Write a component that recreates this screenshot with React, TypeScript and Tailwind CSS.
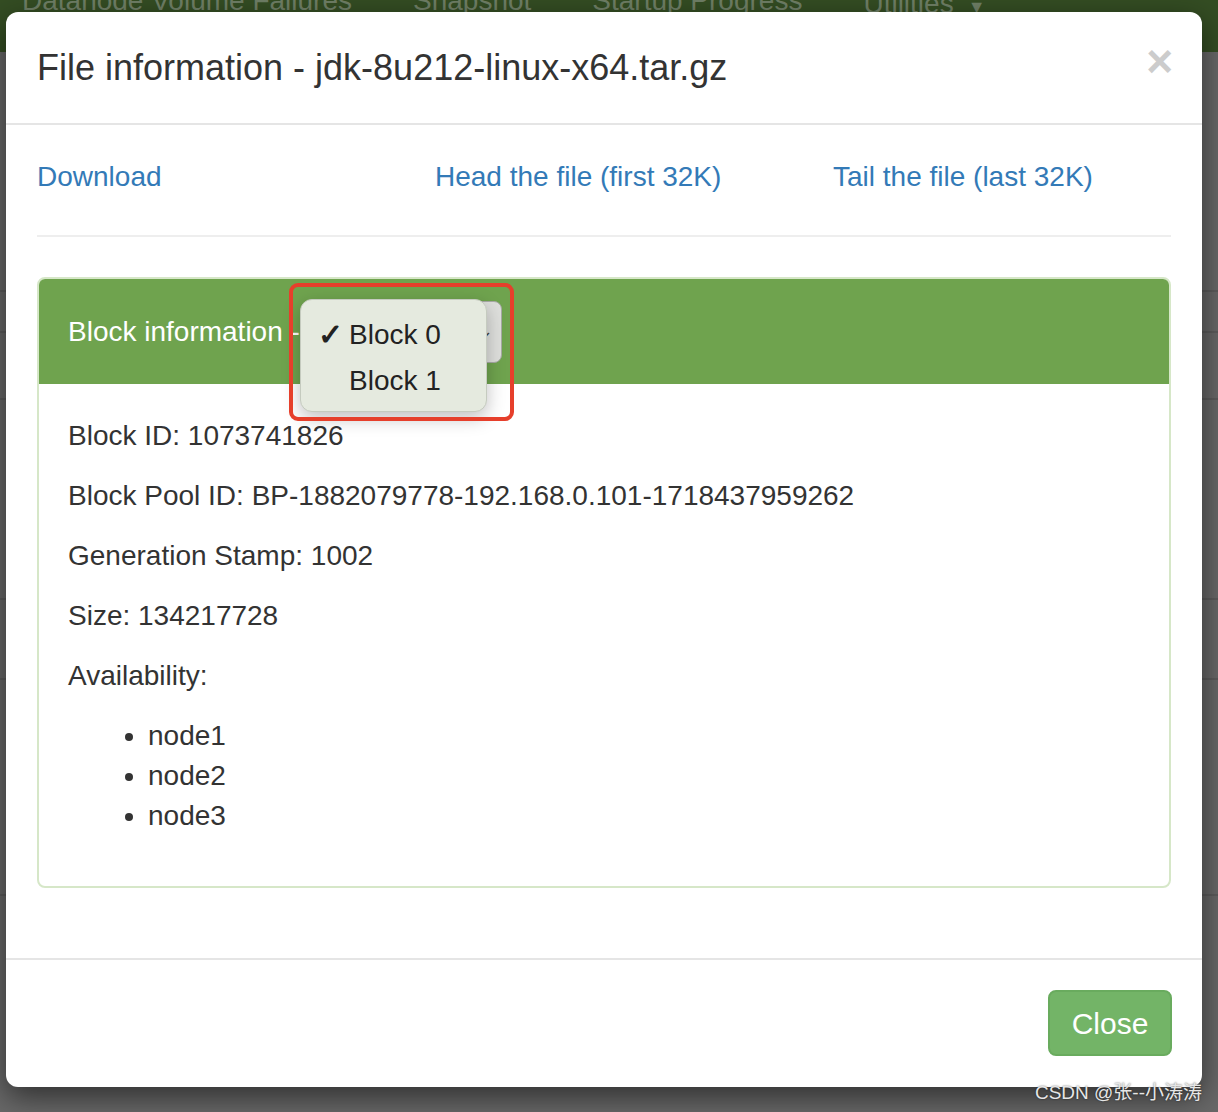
import React from 'react';

const NAV_ITEMS = ['Datanode Volume Failures', 'Snapshot', 'Startup Progress', 'Utilities'];

const BLOCK_FIELDS = [
  { label: 'Block ID', value: '1073741826' },
  { label: 'Block Pool ID', value: 'BP-1882079778-192.168.0.101-1718437959262' },
  { label: 'Generation Stamp', value: '1002' },
  { label: 'Size', value: '134217728' },
];

const NODES = ['node1', 'node2', 'node3'];

const font = { fontFamily: '"Liberation Sans", Arial, sans-serif' };

const BackgroundPage = () => (
  <div className="flex flex-col w-full">
    <div className="h-[52px] bg-[#344d23] overflow-hidden">
      <div className="flex items-start gap-[61px] pl-[22px] -mt-[13px] text-[28px] leading-[28px] text-[#6f7f66]">
        {NAV_ITEMS.map((item) => (
          <span key={item} className="flex items-center gap-[14px] whitespace-nowrap">
            {item}
            {item === 'Utilities' && <span className="text-[18px] mt-[6px]">▼</span>}
          </span>
        ))}
      </div>
    </div>
    <div className="h-[240px] border-b-2 border-[#5c5c5c]" />
    <div className="h-[41px] border-b-2 border-[#5c5c5c]" />
    <div className="h-[67px] border-b-2 border-[#5c5c5c]" />
    <div className="h-[200px] border-b-2 border-[#5c5c5c]" />
    <div className="h-[80px] border-b-2 border-[#5c5c5c]" />
    <div className="h-[216px] border-b-2 border-[#5c5c5c]" />
  </div>
);

const BlockSelectPopup = () => (
  <>
    <div className="absolute left-[250px] top-[4px] w-[225px] h-[138px] border-[4px] border-[#e63f2b] rounded-[9px] z-10" />
    <div className="absolute left-[261px] top-[20px] w-[187px] h-[113px] rounded-[12px] bg-[#e5eadf] border border-[#c5cbbf] shadow-[0_6px_18px_rgba(0,0,0,0.25)] flex flex-col justify-center pt-[4px] text-[28px] leading-[46px] text-[#222]">
      <div className="flex items-center">
        <span className="w-[48px] text-right pr-[6px] text-[30px] font-bold">✓</span>
        <span>Block 0</span>
      </div>
      <div className="flex items-center">
        <span className="w-[48px]" />
        <span>Block 1</span>
      </div>
    </div>
  </>
);

const BlockPanel = () => (
  <div className="relative border-2 border-[#d6e7c8] rounded-[8px] mb-[40px]">
    <div className="h-[105px] bg-[#6fa34e] rounded-t-[6px] flex items-center pl-[29px] text-white text-[28px]">
      <span className="whitespace-nowrap">Block information -</span>
      <div className="ml-[6px] w-[196px] h-[62px] rounded-[8px] bg-[#dedfdc] border border-[#a7a9a4] flex items-center justify-end pr-[8px] text-[#444] text-[18px]">
        ⌄
      </div>
    </div>
    <div className="px-[29px] pt-[32px] pb-[30px] text-[28px] leading-[40px] text-[#333]">
      {BLOCK_FIELDS.map((f) => (
        <p key={f.label} className="mb-[20px]">
          {f.label}: {f.value}
        </p>
      ))}
      <p className="mb-[20px]">Availability:</p>
      <ul className="list-disc pl-[80px] mb-[20px]">
        {NODES.map((n) => (
          <li key={n}>{n}</li>
        ))}
      </ul>
    </div>
    <BlockSelectPopup />
  </div>
);

const FileInfoModal = () => (
  <div className="absolute left-[6px] top-[12px] w-[1196px] bg-white rounded-[12px] shadow-[0_10px_30px_rgba(0,0,0,0.55)] flex flex-col">
    <div className="px-[31px] py-[30px] border-b-2 border-[#e5e5e5] flex items-center justify-between">
      <h4 className="text-[36px] leading-[51px] text-[#333]">File information - jdk-8u212-linux-x64.tar.gz</h4>
      <span className="text-[46px] leading-none font-bold text-[#cccccc] -mt-[14px] mr-[-2px]">×</span>
    </div>
    <div className="px-[31px] pt-[32px] pb-[30px]">
      <div className="grid grid-cols-3 gap-x-[60px] text-[28px] leading-[40px] text-[#337ab7]">
        <a>Download</a>
        <a>Head the file (first 32K)</a>
        <a>Tail the file (last 32K)</a>
      </div>
      <div className="mt-[38px] mb-[40px] border-t-2 border-[#eeeeee]" />
      <BlockPanel />
    </div>
    <div className="border-t-2 border-[#e5e5e5] px-[30px] pt-[30px] pb-[31px] flex justify-end">
      <button className="w-[124px] h-[66px] rounded-[8px] bg-[#73b467] border-2 border-[#69ab5e] text-white text-[30px]">
        Close
      </button>
    </div>
  </div>
);

export default function App() {
  return (
    <div className="relative w-[1218px] h-[1112px] overflow-hidden bg-[#686868]" style={font}>
      <BackgroundPage />
      <FileInfoModal />
      <div
        className="absolute right-[16px] bottom-[5px] text-[19px] text-[#e6e6e6] [text-shadow:0_0_2px_rgba(0,0,0,0.6)]"
        style={{ fontFamily: '"Liberation Sans", "Noto Sans CJK SC", sans-serif' }}
      >
        CSDN @张--小涛涛
      </div>
    </div>
  );
}
